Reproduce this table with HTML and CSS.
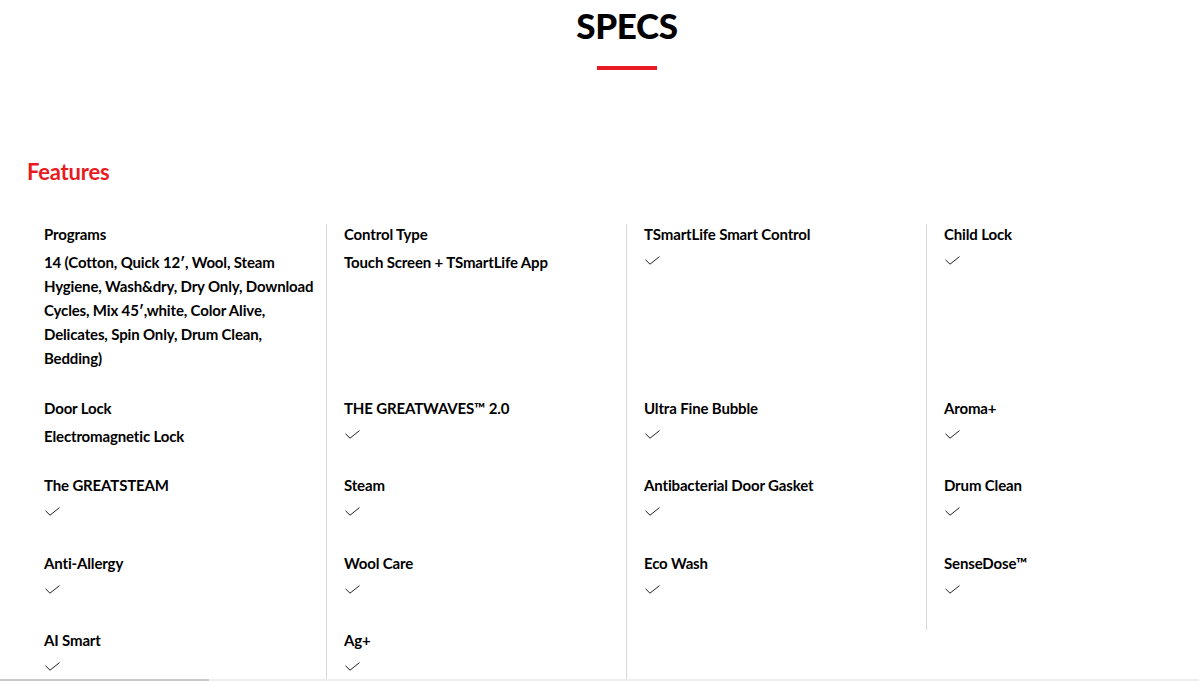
FILE: index.html
```html
<!DOCTYPE html>
<html lang="en">
<head>
<meta charset="utf-8">
<title>Specs</title>
<link rel="stylesheet" href="styles.css">
</head>
<body>
<main class="page">
  <header class="specs-head">
    <h1 class="specs-title">SPECS</h1>
    <span class="specs-bar"></span>
  </header>
  <section class="group">
    <h2 class="group-title">Features</h2>
    <div class="spec-grid">
      <div class="spec">
        <div class="spec-name">Programs</div>
        <div class="spec-value">14 (Cotton, Quick 12′, Wool, Steam Hygiene, Wash&amp;dry, Dry Only, Download Cycles, Mix 45′,white, Color Alive, Delicates, Spin Only, Drum Clean, Bedding)</div>
      </div>
      <div class="spec">
        <div class="spec-name">Control Type</div>
        <div class="spec-value">Touch Screen + TSmartLife App</div>
      </div>
      <div class="spec">
        <div class="spec-name">TSmartLife Smart Control</div>
        <div class="spec-check"><svg class="check" viewBox="0 0 15 9" width="15" height="9"><path d="M0.5 3.8 L5 8.2 L14.5 0.6"/></svg></div>
      </div>
      <div class="spec">
        <div class="spec-name">Child Lock</div>
        <div class="spec-check"><svg class="check" viewBox="0 0 15 9" width="15" height="9"><path d="M0.5 3.8 L5 8.2 L14.5 0.6"/></svg></div>
      </div>

      <div class="spec">
        <div class="spec-name">Door Lock</div>
        <div class="spec-value">Electromagnetic Lock</div>
      </div>
      <div class="spec">
        <div class="spec-name">THE GREATWAVES™ 2.0</div>
        <div class="spec-check"><svg class="check" viewBox="0 0 15 9" width="15" height="9"><path d="M0.5 3.8 L5 8.2 L14.5 0.6"/></svg></div>
      </div>
      <div class="spec">
        <div class="spec-name">Ultra Fine Bubble</div>
        <div class="spec-check"><svg class="check" viewBox="0 0 15 9" width="15" height="9"><path d="M0.5 3.8 L5 8.2 L14.5 0.6"/></svg></div>
      </div>
      <div class="spec">
        <div class="spec-name">Aroma+</div>
        <div class="spec-check"><svg class="check" viewBox="0 0 15 9" width="15" height="9"><path d="M0.5 3.8 L5 8.2 L14.5 0.6"/></svg></div>
      </div>

      <div class="spec">
        <div class="spec-name">The GREATSTEAM</div>
        <div class="spec-check"><svg class="check" viewBox="0 0 15 9" width="15" height="9"><path d="M0.5 3.8 L5 8.2 L14.5 0.6"/></svg></div>
      </div>
      <div class="spec">
        <div class="spec-name">Steam</div>
        <div class="spec-check"><svg class="check" viewBox="0 0 15 9" width="15" height="9"><path d="M0.5 3.8 L5 8.2 L14.5 0.6"/></svg></div>
      </div>
      <div class="spec">
        <div class="spec-name">Antibacterial Door Gasket</div>
        <div class="spec-check"><svg class="check" viewBox="0 0 15 9" width="15" height="9"><path d="M0.5 3.8 L5 8.2 L14.5 0.6"/></svg></div>
      </div>
      <div class="spec">
        <div class="spec-name">Drum Clean</div>
        <div class="spec-check"><svg class="check" viewBox="0 0 15 9" width="15" height="9"><path d="M0.5 3.8 L5 8.2 L14.5 0.6"/></svg></div>
      </div>

      <div class="spec">
        <div class="spec-name">Anti-Allergy</div>
        <div class="spec-check"><svg class="check" viewBox="0 0 15 9" width="15" height="9"><path d="M0.5 3.8 L5 8.2 L14.5 0.6"/></svg></div>
      </div>
      <div class="spec">
        <div class="spec-name">Wool Care</div>
        <div class="spec-check"><svg class="check" viewBox="0 0 15 9" width="15" height="9"><path d="M0.5 3.8 L5 8.2 L14.5 0.6"/></svg></div>
      </div>
      <div class="spec">
        <div class="spec-name">Eco Wash</div>
        <div class="spec-check"><svg class="check" viewBox="0 0 15 9" width="15" height="9"><path d="M0.5 3.8 L5 8.2 L14.5 0.6"/></svg></div>
      </div>
      <div class="spec">
        <div class="spec-name">SenseDose™</div>
        <div class="spec-check"><svg class="check" viewBox="0 0 15 9" width="15" height="9"><path d="M0.5 3.8 L5 8.2 L14.5 0.6"/></svg></div>
      </div>

      <div class="spec">
        <div class="spec-name">AI Smart</div>
        <div class="spec-check"><svg class="check" viewBox="0 0 15 9" width="15" height="9"><path d="M0.5 3.8 L5 8.2 L14.5 0.6"/></svg></div>
      </div>
      <div class="spec">
        <div class="spec-name">Ag+</div>
        <div class="spec-check"><svg class="check" viewBox="0 0 15 9" width="15" height="9"><path d="M0.5 3.8 L5 8.2 L14.5 0.6"/></svg></div>
      </div>
    </div>
  </section>
</main>
<div class="scroll-track"><span class="scroll-thumb"></span></div>
</body>
</html>
```

FILE: styles.css
```css
html, body {
  margin: 0;
  padding: 0;
  background: #fff;
  overflow: hidden;
}
body {
  font-family: "Lato", "Liberation Sans", sans-serif;
  color: #000;
}
.page {
  width: 1254px;
}
.specs-head {
  display: flex;
  flex-direction: column;
  align-items: center;
  padding-top: 3px;
}
.specs-title {
  margin: 0;
  font-size: 35px;
  line-height: 44px;
  font-weight: 900;
  color: #000;
  letter-spacing: -0.3px;
}
.specs-bar {
  display: block;
  width: 60px;
  height: 4px;
  background: #e81b23;
  margin-top: 19px;
}
.group {
  padding: 87px 0 0 27px;
}
.group-title {
  margin: 0 0 37px;
  font-size: 22px;
  line-height: 30px;
  font-weight: 700;
  color: #e81b23;
  letter-spacing: -0.2px;
}
.spec-grid {
  display: grid;
  grid-template-columns: repeat(4, 300px);
}
.spec {
  padding: 0 8px 27.5px 17px;
  border-right: 1px solid #d9d9d9;
}
.spec:nth-child(4n) {
  border-right: none;
}
.spec-name {
  font-size: 15px;
  line-height: 20px;
  font-weight: 700;
  margin-bottom: 6px;
  letter-spacing: -0.15px;
}
.spec-value {
  font-size: 15px;
  line-height: 24px;
  font-weight: 700;
  letter-spacing: -0.15px;
}
.spec-check {
  display: flex;
  align-items: flex-start;
  height: 24px;
  padding-left: 1px;
}
.check {
  display: block;
  margin-top: 6px;
  fill: none;
  stroke: #222;
  stroke-width: 1;
}
.scroll-track {
  position: fixed;
  left: 0;
  right: 0;
  bottom: 0;
  height: 2px;
  background: #eeeeee;
}
.scroll-thumb {
  display: block;
  width: 209px;
  height: 2px;
  background: #c8c8c8;
}
```
